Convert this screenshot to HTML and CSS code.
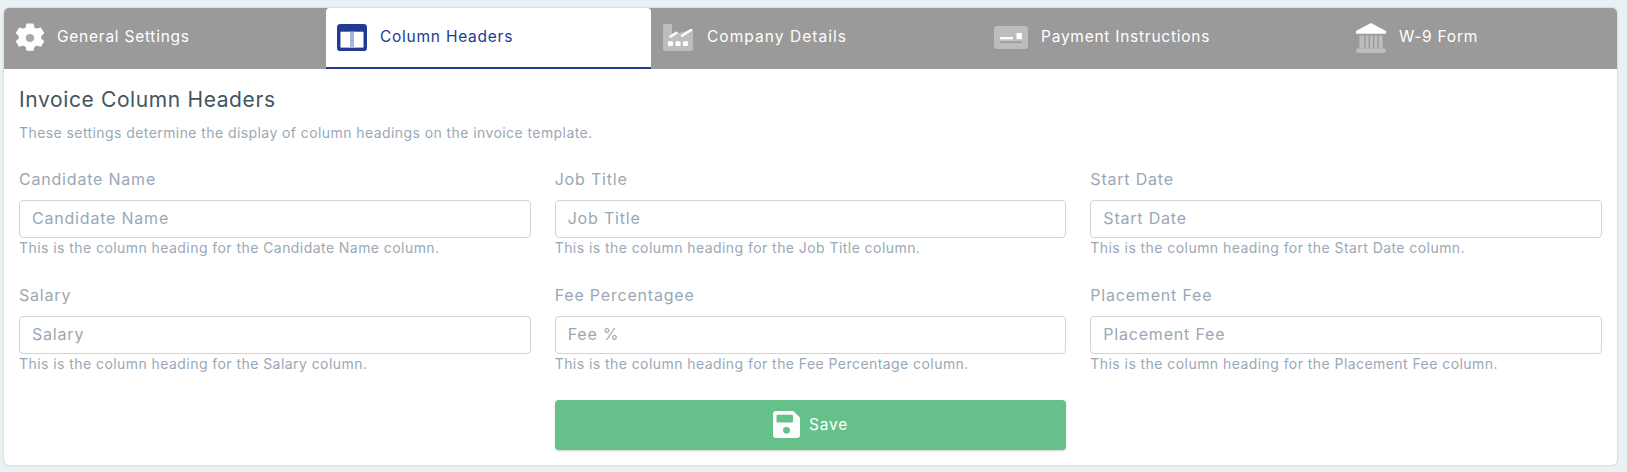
FILE: index.html
```html
<!DOCTYPE html>
<html lang="en">
<head>
  <meta charset="UTF-8">
  <title>Invoice Column Headers</title>
  <link rel="stylesheet" href="styles.css">
</head>
<body>
  <div class="card">
    <!-- Tabs -->
    <div class="tabs">
      <a class="tab tab-general">
        <svg class="icon icon-gear" viewBox="0 0 30 32" preserveAspectRatio="none">
          <path fill="#fff" stroke="#fff" stroke-width="1.200" stroke-linejoin="round" d="M12 1.200h6l1 4 2.600 1.500 4-1.200 3 5.200-3 2.900v3l3 2.900-3 5.200-4-1.200-2.600 1.500-1 4h-6l-1-4-2.600-1.500-4 1.200-3-5.200 3-2.900v-3l-3-2.900 3-5.200 4 1.200 2.600-1.500z"/>
          <circle cx="15" cy="16" r="4.300" fill="#a8a8a8"/>
        </svg>
        General Settings
      </a>
      <a class="tab tab-active">
        <svg class="icon icon-columns" viewBox="0 0 30 28" preserveAspectRatio="none">
          <rect x="0" y="0" width="30" height="28" rx="3.500" fill="#233a95"/>
          <rect x="3.500" y="8" width="23" height="16.500" fill="#fff"/>
          <rect x="13" y="8" width="4" height="16.500" fill="#a9b3d6"/>
        </svg>
        Column Headers
      </a>
      <a class="tab tab-company">
        <svg class="icon icon-factory" viewBox="0 0 30 29" preserveAspectRatio="none">
          <path fill="#bdbdbd" d="M1.500 0h6a1.500 1.500 0 0 1 1.500 1.500V11l21-5v21.500a1.500 1.500 0 0 1-1.500 1.500H1.500A1.500 1.500 0 0 1 0 27.500V1.500A1.500 1.500 0 0 1 1.500 0z"/>
          <path fill="none" stroke="#fff" stroke-width="2.600" stroke-linecap="round" d="M7.500 13.500l6-4M19 12.500l9-6"/>
          <rect x="5" y="18.500" width="5" height="5" rx="1" fill="#fff"/>
          <rect x="12.500" y="18.500" width="5" height="5" rx="1" fill="#fff"/>
          <rect x="20" y="18.500" width="5" height="5" rx="1" fill="#fff"/>
        </svg>
        Company Details
      </a>
      <a class="tab tab-payment">
        <svg class="icon icon-payment" viewBox="0 0 34 25" preserveAspectRatio="none">
          <rect width="34" height="25" rx="3.500" fill="#bdbdbd"/>
          <rect x="6" y="12" width="13" height="2.500" fill="#fff"/>
          <rect x="22.500" y="7.500" width="5.500" height="7" rx="1" fill="#fff"/>
          <rect x="6" y="17" width="22" height="1.200" fill="#8f8f8f"/>
        </svg>
        Payment Instructions
      </a>
      <a class="tab tab-w9">
        <svg class="icon icon-bank" viewBox="0 0 31 31">
          <path fill="#fff" d="M15.500 0L31 8.300V11H0V8.300z"/>
          <path fill="#bdbdbd" d="M3.500 13h5v13h-5zM10 13h3v13h-3zM14.500 13h3v13h-3zM19 13h3v13h-3zM23.500 13h4v13h-4z"/>
          <rect y="26" width="31" height="5" rx="2.500" fill="#bdbdbd"/>
        </svg>
        W-9 Form
      </a>
    </div>

    <div class="panel">
      <h2 class="title">Invoice Column Headers</h2>
      <p class="subtitle">These settings determine the display of column headings on the invoice template.</p>

      <!-- Headers form -->
      <form class="fields">
        <div class="field">
          <label class="field-label">Candidate Name</label>
          <input class="field-input" type="text" placeholder="Candidate Name">
          <small class="field-help">This is the column heading for the Candidate Name column.</small>
        </div>
        <div class="field">
          <label class="field-label">Job Title</label>
          <input class="field-input" type="text" placeholder="Job Title">
          <small class="field-help">This is the column heading for the Job Title column.</small>
        </div>
        <div class="field">
          <label class="field-label">Start Date</label>
          <input class="field-input" type="text" placeholder="Start Date">
          <small class="field-help">This is the column heading for the Start Date column.</small>
        </div>
        <div class="field">
          <label class="field-label">Salary</label>
          <input class="field-input" type="text" placeholder="Salary">
          <small class="field-help">This is the column heading for the Salary column.</small>
        </div>
        <div class="field">
          <label class="field-label">Fee Percentagee</label>
          <input class="field-input" type="text" placeholder="Fee %">
          <small class="field-help">This is the column heading for the Fee Percentage column.</small>
        </div>
        <div class="field">
          <label class="field-label">Placement Fee</label>
          <input class="field-input" type="text" placeholder="Placement Fee">
          <small class="field-help">This is the column heading for the Placement Fee column.</small>
        </div>
        <button class="save" type="button">
          <svg class="icon-save" viewBox="0 0 27 28" preserveAspectRatio="none">
            <path fill="#fff" fill-rule="evenodd" d="M3 0h16.500a2 2 0 0 1 1.400.600l5.500 5.500a2 2 0 0 1 .600 1.400V25a3 3 0 0 1-3 3H3a3 3 0 0 1-3-3V3a3 3 0 0 1 3-3zM4.500 4a1 1 0 0 0-1 1v6a1 1 0 0 0 1 1h14.500a1 1 0 0 0 1-1V5a1 1 0 0 0-1-1zM13.500 16.500a3.500 3.500 0 1 0 0 7 3.500 3.500 0 0 0 0-7z"/>
          </svg>
          Save
        </button>
      </form>
    </div>
  </div>
</body>
</html>
```

FILE: styles.css
```css
body {
  margin: 0;
  padding: 8px 10px 4px 4px;
  background: #e9f1f5;
  font-family: Inter, "Noto Sans", sans-serif;
}

.card {
  background: #fff;
  border-radius: 5px;
  overflow: hidden;
  height: 457px;
  box-shadow: 0 0 2px rgba(90, 110, 130, 0.45);
}

.tabs {
  display: grid;
  grid-template-columns: 322px 325px 331px 363px 1fr;
  height: 61px;
  background: #9a9a9a;
}

.tab {
  display: flex;
  align-items: center;
  color: #fff;
  font-size: 15.5px;
  letter-spacing: 0.75px;
  padding-bottom: 4px;
  padding-left: 11px;
}

.tab-active {
  background: #fff;
  color: #233a95;
  border-radius: 4px 4px 0 0;
  border-bottom: 2px solid #233a95;
  padding-bottom: 2px;
}

.tab-general .icon {
  margin-right: 12px;
}

.tab-company,
.tab-payment {
  padding-left: 12px;
}

.tab-company {
  letter-spacing: 1.05px;
}

.tab-company .icon {
  margin-right: 14px;
}

.icon {
  flex: none;
  margin-top: 2px;
  margin-right: 13px;
}

.icon-gear {
  width: 30px;
  height: 30px;
}

.icon-columns {
  width: 30px;
  height: 27px;
}

.icon-factory {
  width: 30px;
  height: 27px;
}

.icon-payment {
  width: 34px;
  height: 23px;
}

.icon-bank {
  width: 30px;
  height: 30px;
}

.panel {
  padding: 16px 15px 0;
}

.title {
  margin: 0;
  font-size: 21px;
  letter-spacing: 0.62px;
  line-height: 30px;
  font-weight: 400;
  color: #43555f;
}

.subtitle {
  margin: 8px 0 0;
  font-size: 14px;
  letter-spacing: 0.42px;
  line-height: 20px;
  color: #9aa8b6;
}

.fields {
  display: grid;
  grid-template-columns: repeat(3, 1fr);
  column-gap: 24px;
  margin-top: 25px;
}

.field {
  display: flex;
  flex-direction: column;
  height: 116px;
}

.field-label {
  font-size: 16px;
  letter-spacing: 0.8px;
  line-height: 22px;
  color: #9aa8b6;
  margin-bottom: 10px;
}

.field-input {
  box-sizing: border-box;
  height: 38px;
  padding: 0 12px 2px;
  border: 1px solid #ced4da;
  border-radius: 4px;
  font: inherit;
  font-size: 16px;
  letter-spacing: 0.8px;
  color: #495057;
}

.field-input::placeholder {
  color: #9aa8b6;
  opacity: 1;
}

.field-help {
  font-size: 14px;
  letter-spacing: 0.44px;
  line-height: 20px;
  color: #9aa8b6;
}

.save {
  grid-column: 2;
  display: flex;
  align-items: center;
  justify-content: center;
  gap: 9px;
  height: 50px;
  padding-bottom: 2px;
  background: #66c08a;
  color: #fff;
  font: inherit;
  font-size: 15.5px;
  letter-spacing: 0.75px;
  border: none;
  border-radius: 4px;
  box-shadow: 0 1px 2px rgba(0, 0, 0, 0.2);
}

.icon-save {
  width: 27px;
  height: 27px;
}
```
